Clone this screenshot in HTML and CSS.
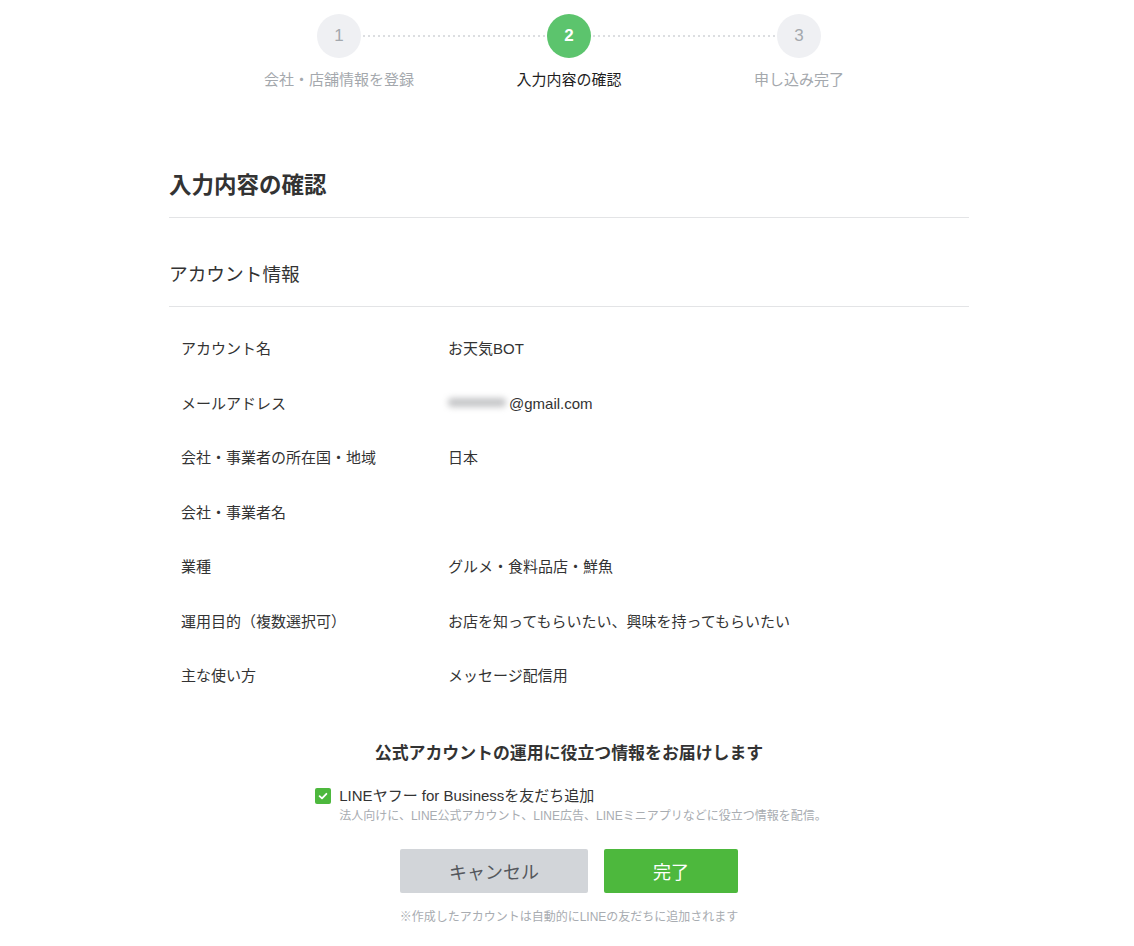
FILE: index.html
```html
<!DOCTYPE html>
<html lang="ja">
<head>
<meta charset="utf-8">
<title>入力内容の確認</title>
<link rel="stylesheet" href="styles.css">
</head>
<body>
<div class="page">
  <ol class="stepper">
    <li class="step"><span class="circle">1</span><span class="step-label">会社・店舗情報を登録</span></li>
    <li class="step active"><span class="circle">2</span><span class="step-label">入力内容の確認</span></li>
    <li class="step"><span class="circle">3</span><span class="step-label">申し込み完了</span></li>
  </ol>

  <main class="content">
    <h1 class="title">入力内容の確認</h1>
    <h2 class="section-title">アカウント情報</h2>
    <dl class="info">
      <div class="row"><dt>アカウント名</dt><dd>お天気BOT</dd></div>
      <div class="row"><dt>メールアドレス</dt><dd><span class="blur"></span>@gmail.com</dd></div>
      <div class="row"><dt>会社・事業者の所在国・地域</dt><dd>日本</dd></div>
      <div class="row"><dt>会社・事業者名</dt><dd></dd></div>
      <div class="row"><dt>業種</dt><dd>グルメ・食料品店・鮮魚</dd></div>
      <div class="row"><dt>運用目的（複数選択可）</dt><dd>お店を知ってもらいたい、興味を持ってもらいたい</dd></div>
      <div class="row"><dt>主な使い方</dt><dd>メッセージ配信用</dd></div>
    </dl>

    <section class="notice">
      <h3 class="notice-title">公式アカウントの運用に役立つ情報をお届けします</h3>
      <div class="check-group">
        <label class="check">
          <span class="box"><svg viewBox="0 0 16 16" width="16" height="16"><path d="M4.6 8.2 L7 10.4 L11.4 5.8" fill="none" stroke="#fff" stroke-width="1.8" stroke-linecap="round" stroke-linejoin="round"/></svg></span>
          <span class="check-text">LINEヤフー for Businessを友だち追加</span>
        </label>
        <p class="check-sub">法人向けに、LINE公式アカウント、LINE広告、LINEミニアプリなどに役立つ情報を配信。</p>
      </div>
      <div class="buttons">
        <button class="btn btn-cancel" type="button">キャンセル</button>
        <button class="btn btn-done" type="button">完了</button>
      </div>
      <p class="footnote">※作成したアカウントは自動的にLINEの友だちに追加されます</p>
    </section>
  </main>
</div>
</body>
</html>
```

FILE: styles.css
```css
* { box-sizing: border-box; }
html, body { margin: 0; padding: 0; background: #fff; }
body {
  font-family: "Liberation Sans", "Noto Sans CJK JP", sans-serif;
  color: #333;
  -webkit-font-smoothing: antialiased;
}
.page { padding-left: 4px; }

/* stepper */
.stepper {
  list-style: none;
  margin: 0;
  padding: 14px 0 0;
  display: flex;
  justify-content: center;
}
.step {
  width: 230px;
  display: flex;
  flex-direction: column;
  align-items: center;
  position: relative;
}
.step + .step::before {
  content: "";
  position: absolute;
  top: 21px;
  right: calc(50% + 24px);
  width: 182px;
  height: 2px;
  background: repeating-linear-gradient(to right, #dcdee1 0 2px, transparent 2px 5px);
}
.circle {
  width: 44px;
  height: 44px;
  border-radius: 50%;
  background: #eff0f3;
  color: #a4a8ad;
  font-size: 17px;
  display: flex;
  align-items: center;
  justify-content: center;
}
.step.active .circle {
  background: #5cc46d;
  color: #fff;
  font-weight: bold;
}
.step-label {
  margin-top: 12px;
  font-size: 15px;
  line-height: 20px;
  color: #a4a8ad;
  white-space: nowrap;
}
.step.active .step-label { color: #1e1e1e; }

/* content */
.content {
  width: 800px;
  margin: 0 auto;
}
.title {
  margin: 82px 0 0;
  font-size: 22.5px;
  line-height: 28px;
  font-weight: bold;
  color: #333;
  padding-bottom: 17px;
  border-bottom: 1px solid #e3e4e6;
}
.section-title {
  margin: 44px 0 0;
  font-size: 18.7px;
  line-height: 26px;
  font-weight: normal;
  color: #333;
  padding-bottom: 18px;
  border-bottom: 1px solid #e3e4e6;
}
.info {
  margin: 15px 0 0;
  padding: 0;
}
.row {
  display: grid;
  grid-template-columns: 267px 1fr;
  padding: 16px 0 16px 12px;
  font-size: 15px;
  line-height: 22.5px;
  color: #333;
}
.row dt, .row dd { margin: 0; }
.blur {
  display: inline-block;
  width: 58px;
  height: 9px;
  margin: 0 3px 0 0;
  vertical-align: 2px;
  border-radius: 4px;
  background: #c4c5c7;
  filter: blur(3px);
}

/* notice */
.notice {
  margin-top: 38px;
  text-align: center;
}
.notice-title {
  margin: 0;
  font-size: 16.9px;
  line-height: 24px;
  font-weight: bold;
  color: #333;
}
.check-group {
  display: inline-block;
  text-align: left;
  margin-top: 20px;
  padding-left: 4px;
}
.check {
  display: flex;
  align-items: center;
  gap: 8px;
  font-size: 15px;
  line-height: 20px;
  color: #333;
}
.box {
  width: 16px;
  height: 16px;
  border-radius: 2px;
  background: #4db83d;
  display: flex;
}
.check-sub {
  margin: 2px 0 0 24px;
  font-size: 12px;
  line-height: 16px;
  color: #a8acb1;
}
.buttons {
  display: flex;
  justify-content: center;
  gap: 16px;
  margin-top: 25px;
}
.btn {
  height: 44px;
  border: none;
  border-radius: 2px;
  font-family: inherit;
  font-size: 18px;
  cursor: pointer;
}
.btn-cancel {
  width: 188px;
  background: #d2d5d9;
  color: #55585d;
}
.btn-done {
  width: 134px;
  background: #4db83d;
  color: #fff;
}
.footnote {
  margin: 16px 0 0;
  font-size: 12px;
  line-height: 16px;
  color: #a8acb1;
}
```
